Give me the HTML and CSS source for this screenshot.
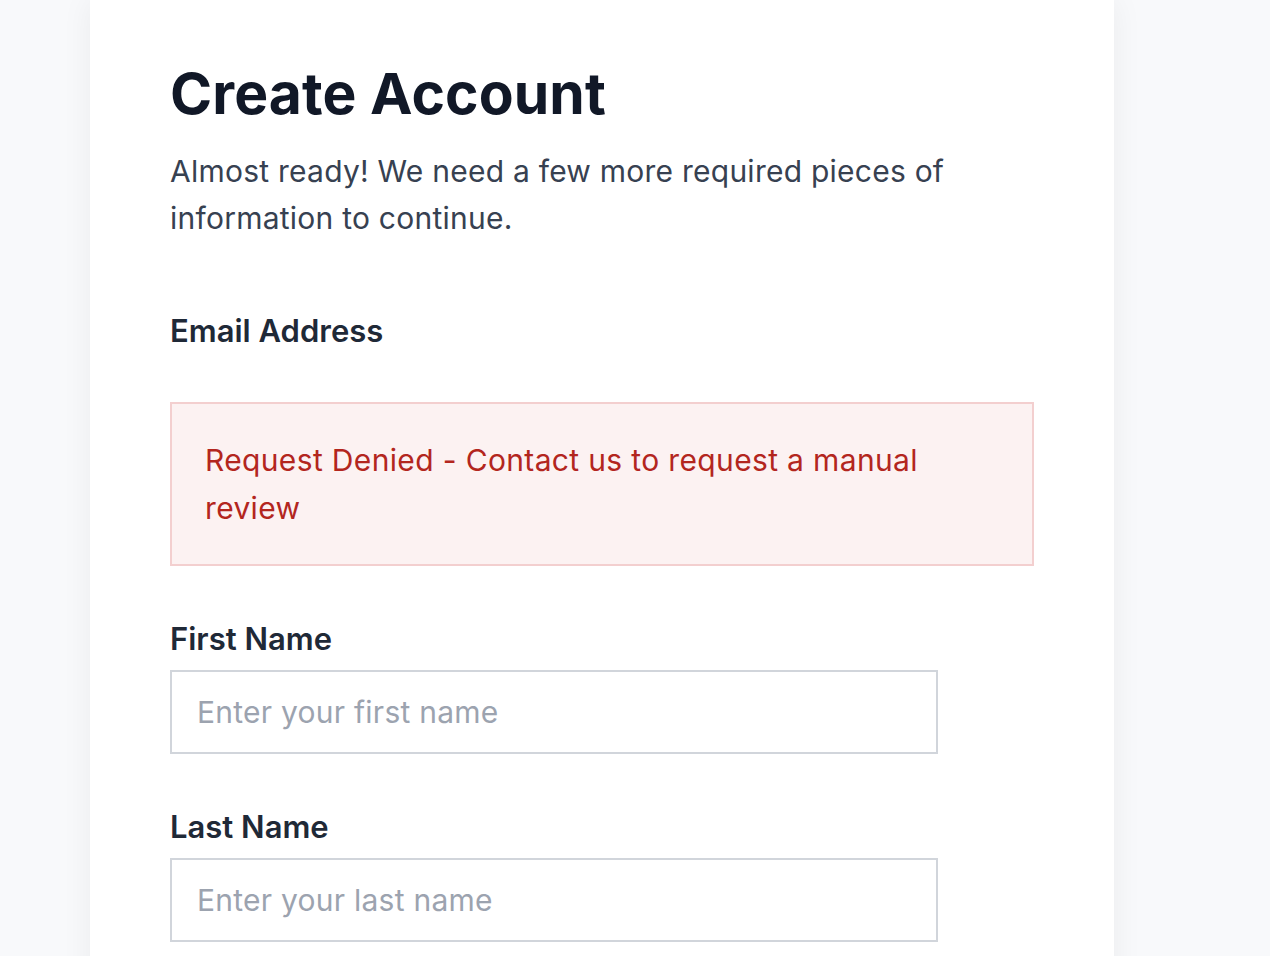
FILE: index.html
```html
<!DOCTYPE html>
<html lang="en">
<head>
<meta charset="utf-8">
<title>Create Account</title>
<link rel="stylesheet" href="styles.css">
</head>
<body>
<main class="card">
  <h1 class="title">Create Account</h1>
  <p class="subtitle">Almost ready! We need a few more required pieces of information to continue.</p>
  <div class="field">
    <div class="label">Email Address</div>
    <div class="alert">Request Denied - Contact us to request a manual review</div>
  </div>
  <div class="field">
    <label class="label" for="first">First Name</label>
    <input class="input" id="first" type="text" placeholder="Enter your first name">
  </div>
  <div class="field">
    <label class="label" for="last">Last Name</label>
    <input class="input" id="last" type="text" placeholder="Enter your last name">
  </div>
</main>
</body>
</html>
```
FILE: styles.css
```css
* { box-sizing: border-box; }
html, body { margin: 0; padding: 0; }
body {
  background: #f8f9fb;
  font-family: Inter, "Noto Sans", sans-serif;
  height: 956px;
  overflow: hidden;
}
.card {
  margin-left: 90px;
  width: 1024px;
  min-height: 1200px;
  background: #ffffff;
  box-shadow: 0 0 30px rgba(17, 24, 39, 0.06);
  padding: 58px 80px 0 80px;
}
.title {
  margin: 0;
  font-size: 57px;
  line-height: 72px;
  font-weight: 700;
  color: #111827;
  letter-spacing: 0.1px;
}
.subtitle {
  margin: 18px 0 0 0;
  width: 800px;
  font-size: 30px;
  line-height: 47px;
  letter-spacing: 0.24px;
  color: #374151;
}
.field {
  display: flex;
  flex-direction: column;
}
.field + .field { margin-top: 52px; }
.subtitle + .field { margin-top: 68px; }
.label {
  font-size: 31px;
  line-height: 42px;
  font-weight: 600;
  color: #1f2937;
}
.alert {
  margin-top: 50px;
  width: 864px;
  border: 2px solid #f3cfcf;
  background: #fcf2f2;
  color: #b3261e;
  padding: 32px 33px 32px 33px;
  font-size: 30px;
  line-height: 48px;
  letter-spacing: 0.35px;
}
.input {
  margin-top: 10px;
  width: 768px;
  height: 84px;
  border: 2px solid #d1d5db;
  border-radius: 0;
  padding: 0 25px;
  font-family: Inter, "Noto Sans", sans-serif;
  font-size: 30px;
  letter-spacing: 0.25px;
  color: #111827;
  background: #fff;
  outline: none;
}
.input::placeholder { color: #9ca3af; }
```
